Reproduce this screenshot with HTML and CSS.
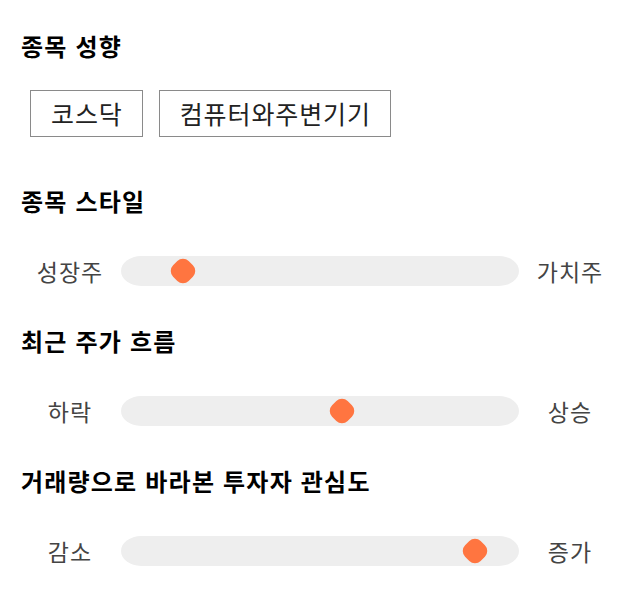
FILE: index.html
```html
<!DOCTYPE html>
<html lang="ko">
<head>
<meta charset="utf-8">
<title>종목 성향</title>
<link rel="stylesheet" href="styles.css">
</head>
<body>
<main class="panel">
  <section class="section section--tags">
    <h2 class="title">종목 성향</h2>
    <div class="tags">
      <span class="tag">코스닥</span>
      <span class="tag">컴퓨터와주변기기</span>
    </div>
  </section>

  <section class="section">
    <h2 class="title">종목 스타일</h2>
    <div class="range">
      <span class="range-label">성장주</span>
      <div class="track"><span class="thumb" style="left: 48px"></span></div>
      <span class="range-label">가치주</span>
    </div>
  </section>

  <section class="section">
    <h2 class="title">최근 주가 흐름</h2>
    <div class="range">
      <span class="range-label">하락</span>
      <div class="track"><span class="thumb" style="left: 207px"></span></div>
      <span class="range-label">상승</span>
    </div>
  </section>

  <section class="section">
    <h2 class="title">거래량으로 바라본 투자자 관심도</h2>
    <div class="range">
      <span class="range-label">감소</span>
      <div class="track"><span class="thumb" style="left: 340px"></span></div>
      <span class="range-label">증가</span>
    </div>
  </section>
</main>
</body>
</html>
```

FILE: styles.css
```css
* {
  box-sizing: border-box;
}

html, body {
  margin: 0;
  padding: 0;
  background: #ffffff;
}

body {
  font-family: "Noto Sans CJK KR", "Noto Sans", sans-serif;
  color: #111;
}

.panel {
  display: flex;
  flex-direction: column;
  gap: 39px;
  padding: 30px 20px 0 20px;
}

.section {
  display: flex;
  flex-direction: column;
  gap: 39px;
}

.section--tags {
  gap: 28px;
  margin-bottom: 9px;
}

.title {
  margin: 0;
  font-size: 24px;
  line-height: 32px;
  font-weight: 700;
  letter-spacing: 1.2px;
  color: #000;
  padding-left: 1px;
}

.tags {
  display: flex;
  gap: 16px;
  padding-left: 10px;
}

.tag {
  display: inline-flex;
  align-items: center;
  justify-content: center;
  height: 47px;
  padding: 0 19px 0 20px;
  border: 1px solid #8a8a8a;
  font-size: 25px;
  letter-spacing: 0.9px;
  font-weight: 400;
  color: #222;
  line-height: 1;
}

.range {
  display: flex;
  align-items: center;
  height: 30px;
}

.range-label {
  width: 100px;
  flex: none;
  text-align: center;
  font-size: 23px;
  letter-spacing: 1px;
  color: #444;
  line-height: 30px;
}

.track {
  position: relative;
  flex: 1;
  height: 30px;
  margin: 0 1px;
  background: #eeeeee;
  border-radius: 20px / 15px;
}

.thumb {
  position: absolute;
  top: 4px;
  width: 22px;
  height: 22px;
  margin-left: 3px;
  background: #ff7540;
  border-radius: 8px;
  transform: rotate(45deg);
}
```
